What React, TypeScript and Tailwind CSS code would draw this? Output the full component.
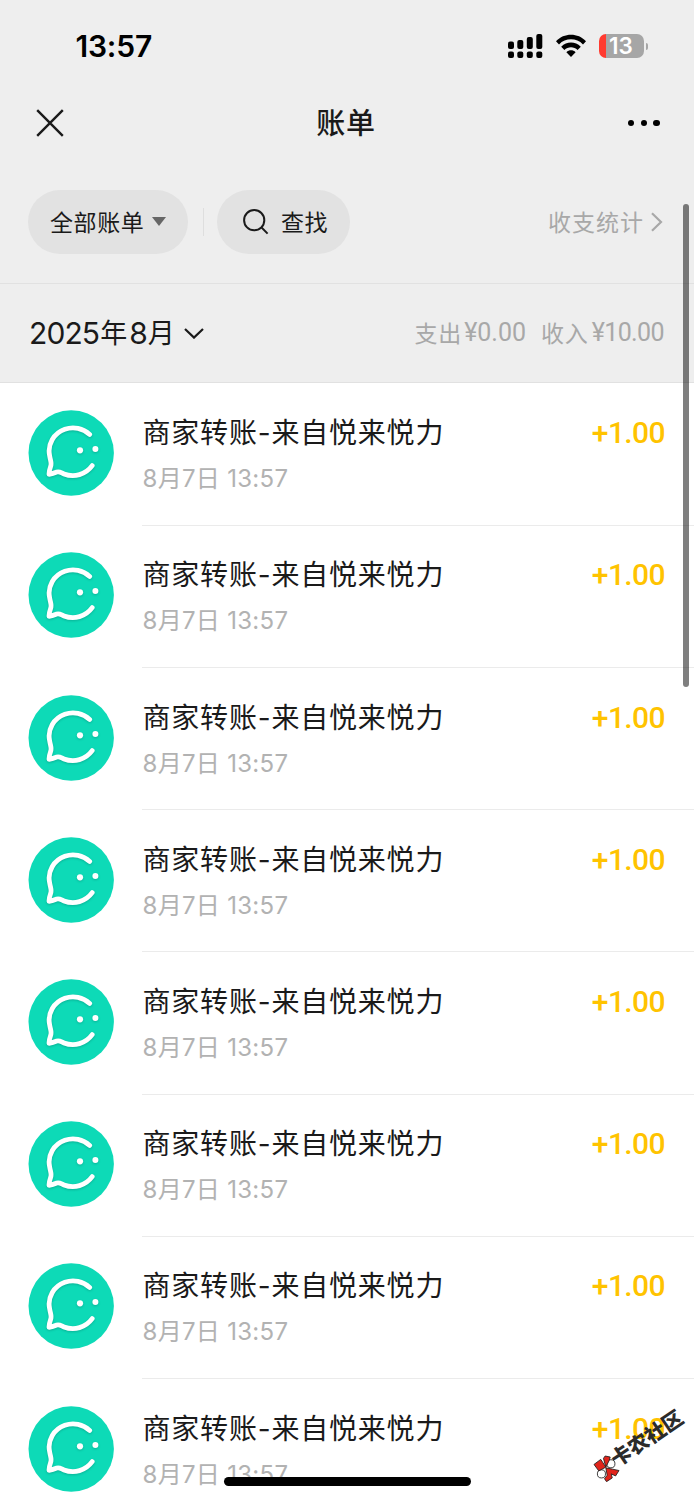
const bills = Array.from({ length: 8 }, (_, id) => ({
  id,
  title: '商家转账-来自悦来悦力',
  time: '8月7日 13:57',
  amount: '+1.00',
}));

const StatusBar = () => {
  return (
    <div className="flex h-[92px] items-center justify-between pl-[75.5px] pr-[46px]">
      <span className="font-['Inter',sans-serif] text-[30px] font-semibold leading-none tracking-[-0.2px] text-black">13:57</span>
      <div className="flex items-center">
        <svg className="h-6 w-[35px]" viewBox="0 0 35 24">
          <rect x="0" y="7.5" width="6" height="7.5" rx="2" />
          <rect x="9.3" y="6" width="6" height="9" rx="2" />
          <rect x="18.8" y="3" width="6" height="12" rx="2" />
          <rect x="28.3" y="0" width="6" height="15" rx="2" />
          <rect x="0" y="17.5" width="6" height="6.5" rx="2" />
          <rect x="9.3" y="17.5" width="6" height="6.5" rx="2" />
          <rect x="18.8" y="17.5" width="6" height="6.5" rx="2" />
          <rect x="28.3" y="17.5" width="6" height="6.5" rx="2" />
        </svg>
        <svg className="ml-[13px] h-6 w-[30px]" viewBox="0 0 30 24">
          <path d="M0 7.2C8-1.4 22-1.4 30 7.2L27 10.4C20.5 3.6 9.5 3.6 3 10.4Z" />
          <path d="M5.2 12.8C10.8 7.2 19.2 7.2 24.8 12.8L21.6 16C18 12.3 12 12.3 8.4 16Z" />
          <path d="M10.4 18.3C13 15.7 17 15.7 19.6 18.3L15 23Z" />
        </svg>
        <div className="ml-[13px] flex h-6 w-[45px] items-center justify-center rounded-[7px] bg-[linear-gradient(90deg,#ff3b30_6.5px,#a6a6a6_6.5px)] pr-px font-['Inter',sans-serif] text-[22.5px] font-semibold leading-6 text-white">
          13
        </div>
        <div className="ml-[2px] h-[7px] w-[2px] rounded-r-full bg-[#a6a6a6]" />
      </div>
    </div>
  );
};

const NavBar = () => {
  return (
    <div className="flex h-[62px] items-center justify-between pl-9 pr-[34px]">
      <svg className="h-7 w-7" viewBox="0 0 28 28" fill="none" stroke="#1a1a1a" strokeWidth="2.4">
        <path d="M1.2 1.2 26.8 26.8M26.8 1.2 1.2 26.8" />
      </svg>
      <h1 className="mb-[3px] text-[29px] font-medium leading-none tracking-[0.8px] text-[#1a1a1a]">账单</h1>
      <div className="flex w-8 justify-between">
        <i className="size-[6.5px] rounded-full bg-black" />
        <i className="size-[6.5px] rounded-full bg-black" />
        <i className="size-[6.5px] rounded-full bg-black" />
      </div>
    </div>
  );
};

const Filters = () => {
  return (
    <div className="flex h-[130px] items-center border-b border-[#e1e1e1] pl-[28px] pr-[31px] pt-[6px]">
      <button className="flex h-16 w-40 items-center rounded-full bg-[#e2e2e2] pl-[22px] text-[23px] tracking-[0.6px] text-[#1a1a1a]">
        全部账单
        <svg className="ml-[8px] h-[9px] w-[14px]" viewBox="0 0 14 9" fill="#666">
          <path d="M0 0H14L7 9Z" />
        </svg>
      </button>
      <div className="ml-[15px] h-7 w-px bg-[#dedede]" />
      <button className="ml-[13px] flex h-16 w-[133px] items-center rounded-full bg-[#e2e2e2] pl-[26px] text-[23px] tracking-[0.6px] text-[#1a1a1a]">
        <svg className="mr-3 h-[26px] w-[26px]" viewBox="0 0 26 26" fill="none" stroke="#1a1a1a" strokeWidth="2">
          <circle cx="11.2" cy="11.2" r="10.1" />
          <path d="M18.3 18.3 24.6 24.6" />
        </svg>
        查找
      </button>
      <a className="ml-auto flex items-center text-[23px] tracking-[1px] text-[#a8a8a8]">
        收支统计
        <svg className="ml-[7px] h-5 w-3" viewBox="0 0 12 20" fill="none" stroke="#a8a8a8" strokeWidth="2.2">
          <path d="M1 1.2 10 10 1 18.8" />
        </svg>
      </a>
    </div>
  );
};

const MonthSummary = () => {
  return (
    <div className="flex h-[99px] items-center justify-between border-b border-[#e1e1e1] pl-[29px] pr-[30px]">
      <div className="flex items-center text-[27px] text-[#1a1a1a]">
        <span className="font-['Inter',sans-serif] text-[30px] tracking-[-0.9px]">2025</span>
        <span className="mb-[2px] ml-px">年</span>
        <span className="ml-[2px] font-['Inter',sans-serif] text-[30px]">8</span>
        <span className="mb-[2px]">月</span>
        <svg className="ml-[9px] h-[11px] w-5" viewBox="0 0 20 11" fill="none" stroke="#1a1a1a" strokeWidth="2.2">
          <path d="M1 1 10 9.6 19 1" />
        </svg>
      </div>
      <div className="flex items-center text-[23px] text-[#a8a8a8]">
        <span className="mb-[2px] tracking-[0.8px]">支出</span>
        <span className="ml-[2px] font-['Roboto',sans-serif] text-[25px]">¥0.00</span>
        <span className="mb-[2px] ml-[15px] tracking-[0.8px]">收入</span>
        <span className="ml-[3px] font-['Roboto',sans-serif] text-[25px] tracking-[-0.6px]">¥10.00</span>
      </div>
    </div>
  );
};

const Avatar = () => {
  return (
    <svg className="mt-[26.5px] size-[86px] shrink-0" viewBox="0 0 86 86">
      <circle cx="43.2" cy="43" r="42.7" fill="#0ddab7" />
      <g className="drop-shadow-[0_1.5px_1px_rgba(0,90,75,0.3)]">
        <path
          d="M61.7 24.4C55 18.3 45.5 16.2 36.8 19.3C25.5 23.3 19.5 34.5 21.5 45C22.5 51.5 24 53 22.6 56.5Q21 61 21 64.3Q25 63.5 28.8 62C31.5 61 33 62.7 36 63.9C46.3 67.8 57.6 64.6 64.2 55.6"
          fill="none"
          stroke="#fff"
          strokeWidth="4.8"
          strokeLinecap="round"
          strokeLinejoin="round"
        />
        <circle cx="52" cy="40.3" r="3.1" fill="#fff" />
        <circle cx="67.4" cy="39" r="3" fill="#fff" />
      </g>
    </svg>
  );
};

const BillRow = ({ title, time, amount }: { title: string; time: string; amount: string }) => {
  return (
    <li className="flex h-[142.2px] shrink-0 pl-[28px]">
      <Avatar />
      <div className="ml-[28px] flex grow justify-between border-b border-[#ebebeb] pl-[0.5px] pr-[29px] pt-[29.5px]">
        <div className="whitespace-nowrap">
          <p className="h-[40px] font-['Inter','Noto_Sans_CJK_SC',sans-serif] text-[28px] leading-[40px] tracking-[0.8px] text-[#1a1a1a]">{title}</p>
          <p className="mt-[9px] font-['Inter','Noto_Sans_CJK_SC',sans-serif] text-[24px] leading-[34px] tracking-[0.3px] text-[#b2b2b2]">{time}</p>
        </div>
        <span className="font-['Roboto',sans-serif] text-[30px] font-medium leading-[40px] tracking-[-0.6px] text-[#ffc300]">{amount}</span>
      </div>
    </li>
  );
};

const Watermark = () => {
  return (
    <div className="absolute left-[593px] top-[1408px] h-[74px] w-[100px]">
      <svg className="absolute bottom-0 left-0 size-[27px]" viewBox="70 194 80 80" stroke="#1c1c1c" strokeWidth="2.5">
        <circle cx="95" cy="250" r="12" fill="#fff" />
        <circle cx="123" cy="220" r="12" fill="#fff" />
        <path d="M73 222 93 207 108 230 87 241Z" fill="#e0241b" />
        <path d="M101 204 106 197 121 200 118 210 108 230Z" fill="#e0241b" />
        <path d="M108 232 128 236 147 240 137 256 124 250 127 262 110 273 104 264 112 254Z" fill="#e0241b" />
      </svg>
      <span className="absolute left-[12px] top-[19px] -rotate-[34deg] whitespace-nowrap text-[20.5px] font-black leading-none text-[#2b2b2b]">卡农社区</span>
    </div>
  );
};

export default function App() {
  return (
    <div className="relative flex h-[1500px] w-[694px] flex-col overflow-hidden bg-white font-['Noto_Sans_CJK_SC',sans-serif]">
      <header className="shrink-0 bg-[#eeeeee]">
        <StatusBar />
        <NavBar />
        <Filters />
        <MonthSummary />
      </header>
      <ul className="flex flex-col pt-[0.7px]">
        {bills.map((bill) => (
          <BillRow key={bill.id} title={bill.title} time={bill.time} amount={bill.amount} />
        ))}
      </ul>
      <div className="absolute left-[683px] top-[204px] h-[483px] w-[6px] rounded-full bg-black/50" />
      <div className="absolute left-[224px] top-[1477px] h-[9px] w-[247px] rounded-full bg-black" />
      <Watermark />
    </div>
  );
}
